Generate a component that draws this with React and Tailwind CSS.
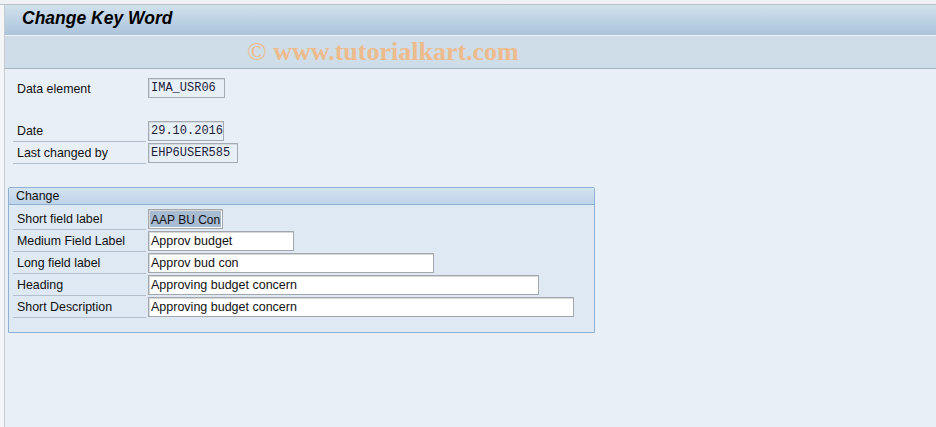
import React from "react";

const labelFont = { fontFamily: '"Liberation Sans", Arial, sans-serif' };

function Label({ children, underline = true, width = "w-[133px]" }) {
  return (
    <div
      className={`${width} h-[22px] pl-[4px] pt-[2px] flex items-center text-[12.4px] text-[#111] whitespace-nowrap ${
        underline ? "border-b border-[#b3bfcc]" : ""
      }`}
      style={labelFont}
    >
      {children}
    </div>
  );
}

function MonoBox({ children, w }) {
  return (
    <div
      className={`${w} h-[20px] mt-px ml-[2px] border border-[#a6abb1] bg-[#e7eff7] shadow-[inset_1px_1px_0_#d5dbe2] flex items-center pl-[2px] text-[12px] text-[#1e1e3a] font-['Liberation_Mono',monospace] whitespace-nowrap`}
    >
      {children}
    </div>
  );
}

function InBox({ children, w, selected }) {
  return (
    <div
      className={`${w} h-[20px] mt-px ml-[2px] border border-[#a3a8ae] bg-white shadow-[inset_1px_1px_0_#d7d7d7] flex items-stretch p-px text-[#111] whitespace-nowrap overflow-hidden ${
        selected ? "text-[12px]" : "text-[12.5px]"
      }`}
      style={labelFont}
    >
      <span
        className={`flex items-center pt-px ${
          selected ? "bg-[#a7bbd3] w-full pl-px" : "pl-px"
        }`}
      >
        {children}
      </span>
    </div>
  );
}

export default function App() {
  const rows = [
    ["Short field label", "AAP BU Con", "w-[75px]", true],
    ["Medium Field Label", "Approv budget", "w-[146px]", false],
    ["Long field label", "Approv bud con", "w-[286px]", false],
    ["Heading", "Approving budget concern", "w-[391px]", false],
    ["Short Description", "Approving budget concern", "w-[426px]", false],
  ];
  return (
    <div className="w-[936px] h-[427px] overflow-hidden flex flex-col bg-[#f4f5f7]">
      <div className="h-[5px] shrink-0 bg-[#eff1f4] border-b border-[#b8c2cd]" />
      <div className="flex flex-1">
        <div className="w-[4px] bg-[#f4f5f7]" />
        <div className="flex-1 flex flex-col border-l border-[#c6ccd3]">
          <div className="h-[30px] shrink-0 bg-gradient-to-b from-[#d1e2ee] to-[#abc3db] pl-[17px] pb-[3px] flex items-center">
            <span className="text-[17.5px] font-bold italic text-black leading-none" style={labelFont}>
              Change Key Word
            </span>
          </div>
          <div className="h-px shrink-0 bg-[#edf3f9]" />
          <div className="h-[33px] shrink-0 bg-[#cfdde8] border-b border-[#a7b7c9] pl-[242px] flex items-center">
            <span className="text-[26px] font-bold text-[#edbb8c] leading-none font-['Liberation_Serif',serif] whitespace-nowrap">
              <span className="font-normal">©</span> www.tutorialkart.com
            </span>
          </div>
          <div className="flex-1 bg-[#e9eff7] pt-[8px] flex flex-col">
            <div className="flex h-[22px] ml-[8px]">
              <Label underline={false}>Data element</Label>
              <MonoBox w="w-[77px]">IMA_USR06</MonoBox>
            </div>
            <div className="flex h-[22px] ml-[8px] mt-[21px]">
              <Label>Date</Label>
              <MonoBox w="w-[76px]">29.10.2016</MonoBox>
            </div>
            <div className="flex h-[22px] ml-[8px]">
              <Label>Last changed by</Label>
              <MonoBox w="w-[90px]">EHP6USER585</MonoBox>
            </div>
            <div className="ml-[3px] mt-[23px] w-[587px] h-[146px] border border-[#8fb0d1] rounded-t-[2px] bg-[#dfe9f4] flex flex-col">
              <div
                className="h-[17px] shrink-0 bg-gradient-to-b from-[#d3e3f1] to-[#bfd4e8] border-b border-[#8fb0d1] pl-[7px] flex items-center text-[12.4px] text-[#111]"
                style={labelFont}
              >
                Change
              </div>
              <div className="pt-[3px] flex flex-col">
                {rows.map(([l, v, w, s]) => (
                  <div key={l} className="flex h-[22px] ml-[4px]">
                    <Label>{l}</Label>
                    <InBox w={w} selected={s}>
                      {v}
                    </InBox>
                  </div>
                ))}
              </div>
            </div>
          </div>
        </div>
      </div>
    </div>
  );
}
